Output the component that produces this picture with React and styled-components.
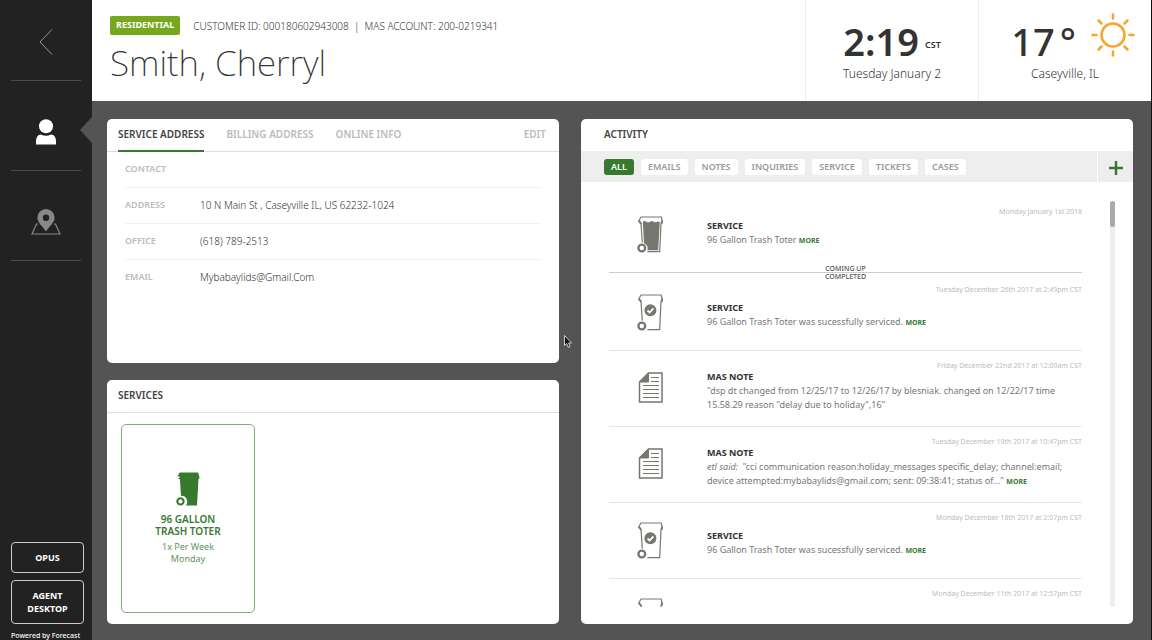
import React from "react";
import styled, { createGlobalStyle } from "styled-components";

const GlobalStyle = createGlobalStyle`
  *, *::before, *::after { box-sizing: border-box; }
  body {
    margin: 0;
    background: #545454;
    color: #555;
    font-family: "Noto Sans", "Open Sans", sans-serif;
    font-size: 10px;
    line-height: 14px;
  }
  h1, h2, h3, p, ul, dl, dd, dt { margin: 0; padding: 0; }
  ul { list-style: none; }
  button { font-family: inherit; cursor: pointer; }
`;

const green = "#37792f";

const Shell = styled.div`
  position: relative;
  display: grid;
  grid-template-columns: 92px minmax(0, 1fr);
  height: 100vh;
  min-height: 560px;
  overflow: hidden;
  border-right: 1px solid #111;
`;

const Sidebar = styled.aside`
  display: flex;
  flex-direction: column;
  justify-content: space-between;
  min-height: 0;
  background: #222;
  color: #fff;
`;

const NavItem = styled.li`
  position: relative;
  margin: 0 11px;
  padding: ${(p) => (p.$first ? 28 : 37)}px 0 24px;
  border-bottom: 1px solid #4a4a4a;
`;

const NavButton = styled.button`
  display: flex;
  align-items: center;
  justify-content: center;
  width: 100%;
  height: 28px;
  padding: 0;
  border: 0;
  background: none;
`;

const ActiveNotch = styled.span`
  position: absolute;
  right: -11px;
  top: 36px;
  border-style: solid;
  border-color: transparent #545454 transparent transparent;
  border-width: 13px 12px 13px 0;
`;

const SidebarFoot = styled.div`
  display: flex;
  flex-direction: column;
  gap: 7px;
  padding: 0 8px 0 11px;
`;

const OutlineButton = styled.button`
  padding: 8px 4px;
  border: 1px solid #ccc;
  border-radius: 4px;
  background: #222;
  color: #fff;
  font-size: 9px;
  font-weight: 700;
  line-height: 13px;
`;

const Powered = styled.p`
  font-size: 7px;
  font-weight: 500;
  line-height: 9px;
  white-space: nowrap;
`;

const Page = styled.div`
  display: flex;
  flex-direction: column;
  min-width: 0;
  min-height: 0;
`;

const Header = styled.header`
  display: grid;
  grid-template-columns: minmax(0, 1fr) 173px 173px;
  flex: none;
  min-height: 101px;
  background: #fff;
`;

const Customer = styled.div`
  padding: 16px 18px 0;
`;

const CustomerMeta = styled.div`
  display: flex;
  align-items: center;
  gap: 13px;
  color: #333;
  font-size: 10px;
  font-weight: 300;
  white-space: nowrap;
`;

const Badge = styled.span`
  padding: 2px 6px 3px;
  border-radius: 2px;
  background: #76a81e;
  color: #fff;
  font-size: 9px;
  font-weight: 700;
`;

const Name = styled.h1`
  margin-top: 2px;
  color: #333;
  font-size: 35px;
  font-weight: 200;
  line-height: 52px;
`;

const Panel = styled.div`
  display: flex;
  flex-direction: column;
  align-items: center;
  padding-top: 20px;
  border-left: 1px solid #eee;
`;

const PanelTop = styled.div`
  display: flex;
  align-items: center;
  gap: 6px;
  height: 42px;
  color: #333;
  font-size: 38px;
  font-weight: 600;
  line-height: 42px;
`;

const Temperature = styled(PanelTop)`
  gap: 5px;
  padding-left: 16px;
  font-weight: 500;
`;

const Zone = styled.span`
  padding-top: 8px;
  font-size: 9px;
  line-height: 14px;
`;

const Sun = styled.svg`
  margin: -12px 0 0 10px;
`;

const PanelText = styled.div`
  color: #333;
  font-size: 12px;
  font-weight: 300;
  line-height: 24px;
`;

const Main = styled.main`
  display: grid;
  grid-template-columns: minmax(0, 452fr) minmax(0, 552fr);
  grid-template-rows: minmax(0, 1fr) minmax(0, 1fr);
  gap: 17px 22px;
  flex: 1;
  min-height: 0;
  padding: 18px 18px 16px 15px;
`;

const Card = styled.section`
  display: flex;
  flex-direction: column;
  grid-row: ${(p) => (p.$tall ? "1 / span 2" : "auto")};
  grid-column: ${(p) => (p.$tall ? 2 : 1)};
  min-height: 0;
  overflow: hidden;
  border-radius: 5px;
  background: #fff;
`;

const CardHead = styled.div`
  display: flex;
  align-items: stretch;
  gap: 22px;
  flex: none;
  height: ${(p) => (p.$plain ? 32 : 33)}px;
  padding: 0 ${(p) => (p.$plain ? 23 : 11)}px;
  border-bottom: ${(p) => (p.$plain ? "0" : "1px solid #ddd")};
`;

const CardTitle = styled.h2`
  color: #444;
  font-size: 10px;
  font-weight: 600;
  line-height: 31px;
`;

const Tab = styled.button`
  height: 33px;
  margin-left: ${(p) => (p.$end ? "auto" : 0)};
  padding: 0 ${(p) => (p.$end ? 2 : 0)}px 2px 0;
  border: 0;
  border-bottom: 2px solid ${(p) => (p.$active ? green : "transparent")};
  background: none;
  color: ${(p) => (p.$active ? "#444" : "#bbb")};
  font-size: 10px;
  font-weight: 600;
`;

const Details = styled.dl`
  padding: 0 18px;
`;

const DetailRow = styled.div`
  display: grid;
  grid-template-columns: 75px minmax(0, 1fr);
  align-items: center;
  height: 36px;
  padding-bottom: 1px;
  border-bottom: 1px solid ${(p) => (p.$last ? "transparent" : "#f2f2f2")};

  dt { color: #bbb; font-size: 9px; font-weight: 600; }
  dd { color: #333; font-weight: 300; }
`;

const ServicesBody = styled.div`
  display: flex;
  flex: 1;
  min-height: 0;
  padding: 11px 14px;
`;

const ServiceTile = styled.button`
  display: flex;
  flex-direction: column;
  align-items: center;
  justify-content: center;
  width: 134px;
  border: 1px solid #7fac7a;
  border-radius: 5px;
  background: #fff;
  color: ${green};
  line-height: 12px;

  strong { width: 80px; margin: 7px 0 4px; font-size: 10px; font-weight: 600; }
  span { width: 60px; font-size: 9px; font-weight: 400; color: #5e9658; }
`;

const FilterBar = styled.div`
  display: flex;
  flex: none;
  height: 31px;
  background: #eee;
`;

const Filters = styled.div`
  display: flex;
  align-items: center;
  gap: 7px;
  flex: 1;
  padding-left: 23px;
`;

const Filter = styled.button`
  height: 16px;
  padding: 0 7px;
  border: 0;
  border-radius: 3px;
  background: ${(p) => (p.$active ? green : "#fff")};
  color: ${(p) => (p.$active ? "#fff" : "#999")};
  font-size: 9px;
  font-weight: 600;
  line-height: 16px;
`;

const AddButton = styled.button`
  display: flex;
  align-items: center;
  justify-content: center;
  width: 36px;
  padding: 2px 0 0;
  border: 0;
  border-left: 1px solid #fff;
  background: none;
`;

const Feed = styled.div`
  display: flex;
  flex: 1;
  gap: 28px;
  min-height: 0;
  padding: 15px 18px 17px 28px;
`;

const FeedList = styled.ul`
  flex: 1;
  min-width: 0;
  overflow-y: auto;
  scrollbar-width: none;
`;

const Track = styled.div`
  width: 5px;
  margin-top: 4px;
  border-radius: 3px;
  background: #eee;
`;

const Thumb = styled.div`
  height: 26px;
  border-radius: 3px;
  background: #aaa;
`;

const Entry = styled.li`
  position: relative;
  display: grid;
  grid-template-columns: 82px minmax(0, 1fr);
  column-gap: 16px;
  align-items: center;
  height: 76px;
  border-bottom: 1px solid ${(p) => (p.$plain ? "transparent" : "#e4e4e4")};
`;

const EntryIcon = styled.div`
  display: flex;
  justify-content: center;
`;

const EntryDate = styled.time`
  position: absolute;
  top: 10px;
  right: 0;
  color: #bbb;
  font-size: 7px;
  line-height: 10px;
`;

const EntryText = styled.div`
  padding: ${(p) => (p.$plain ? "0 0 3px" : "4px 0 0")};
  color: #777;
  font-size: 9px;

  h3 { color: #333; font-size: 9px; font-weight: 700; }
`;

const More = styled.button`
  padding: 0;
  border: 0;
  background: none;
  color: ${green};
  font-size: 7px;
  font-weight: 700;
`;

const Divider = styled.li`
  position: relative;
  height: 2px;
`;

const DividerLabels = styled.div`
  position: absolute;
  left: 0;
  right: 0;
  top: -8px;
  height: 15px;
  overflow: hidden;
  color: #555;
  font-size: 7px;
  font-weight: 500;
  line-height: 8px;
  text-align: center;

  &::after {
    content: "";
    position: absolute;
    left: 0;
    right: 0;
    top: 7px;
    border-top: 1px solid #ccc;
  }
`;

const Cursor = styled.svg`
  position: absolute;
  left: 564px;
  top: 335px;
  pointer-events: none;
`;

function Toter({ variant, color = "#77776f", width = 26, height = 37 }) {
  const solid = variant === "solid";
  return (
    <svg width={width} height={height} viewBox="0 0 26 37" fill="none" aria-hidden="true">
      {solid ? (
        <>
          <path d="M4 .5H24L25.6 6 24.4 8 22.8 36.5H10.5A6.3 6.3 0 0 0 5.4 26L4.2 8 2.2 7 1.6 4.5Z" fill={color} />
          <circle cx="2.8" cy="5.6" r="1.1" fill="#fff" />
        </>
      ) : (
        <>
          <path
            d="M5.3 26.5 4 7.4 1.6 5.2 4 1H24.2L25.2 5.2 24 7.4 22.7 35.6H10.4"
            stroke={color}
            strokeWidth="1.2"
            strokeLinejoin="round"
          />
          <path d="M2 4.8 4.2 8M25 4.6V7.8" stroke={color} strokeWidth="1.8" />
        </>
      )}
      {variant === "full" && (
        <path
          d="M5.8 5.8Q7.8 4.2 9.4 5.8 11.4 7.2 13.4 5.4 15 4.4 16.6 5.8 18.6 7 20.4 5.4L22.8 5.8 21.2 34.2H10.4A6 6 0 0 0 7 27.2Z"
          fill={color}
        />
      )}
      {variant === "done" && (
        <>
          <circle cx="13.4" cy="16.3" r="6" fill={color} />
          <path d="M10.5 16.5 12.7 18.5 16.4 14.4" stroke="#fff" strokeWidth="1.8" />
        </>
      )}
      <circle cx="4.8" cy="32" r="3.4" stroke={color} strokeWidth="2.3" fill="#fff" />
    </svg>
  );
}

function NoteIcon() {
  return (
    <svg width="26" height="33" viewBox="0 0 26 33" fill="none" stroke="#77776f" aria-hidden="true">
      <path d="M11.5 1H25V30H2.5V10Z" strokeWidth="1.5" />
      <path d="M11.5 1V10H2.5Z" fill="#77776f" />
      <path d="M14 5.500H22M14 9.500H22M6 13.500H22M6 17.500H22M6 21.500H22M6 25.500H22" strokeWidth="1.2" />
    </svg>
  );
}

const filters = ["ALL", "EMAILS", "NOTES", "INQUIRIES", "SERVICE", "TICKETS", "CASES"];

const details = [
  ["CONTACT", ""],
  ["ADDRESS", "10 N Main St , Caseyville IL, US 62232-1024"],
  ["OFFICE", "(618) 789-2513"],
  ["EMAIL", "Mybabaylids@Gmail.Com"],
];

const entries = [
  {
    icon: "done", title: "SERVICE", date: "Tuesday December 26th 2017 at 2:49pm CST",
    text: "96 Gallon Trash Toter was sucessfully serviced.", more: true,
  },
  {
    icon: "note", title: "MAS NOTE", date: "Friday December 22nd 2017 at 12:00am CST",
    text: <>"dsp dt changed from 12/25/17 to 12/26/17 by blesniak. changed on 12/22/17 time<br />15.58.29 reason "delay due to holiday",16"</>,
  },
  {
    icon: "note", title: "MAS NOTE", date: "Tuesday December 19th 2017 at 10:47pm CST",
    text: <><em>etl said:</em>&nbsp; "cci communication reason:holiday_messages specific_delay; channel:email;<br />device attempted:mybabaylids@gmail.com; sent: 09:38:41; status of..."</>,
    more: true,
  },
  {
    icon: "done", title: "SERVICE", date: "Monday December 18th 2017 at 2:07pm CST",
    text: "96 Gallon Trash Toter was sucessfully serviced.", more: true,
  },
  {
    icon: "done", title: "SERVICE", date: "Monday December 11th 2017 at 12:57pm CST",
    text: "96 Gallon Trash Toter was sucessfully serviced.", more: true,
  },
];

function FeedEntry({ icon, title, date, text, more, plain }) {
  return (
    <Entry $plain={plain}>
      <EntryIcon>{icon === "note" ? <NoteIcon /> : <Toter variant={icon} />}</EntryIcon>
      <EntryText $plain={plain}>
        <h3>{title}</h3>
        <p>{text} {more && <More>MORE</More>}</p>
      </EntryText>
      <EntryDate>{date}</EntryDate>
    </Entry>
  );
}

export default function App() {
  return (
    <>
      <GlobalStyle />
      <Shell>
        <Sidebar>
          <nav>
            <ul>
              <NavItem $first>
                <NavButton aria-label="Back">
                  <svg width="14" height="26" viewBox="0 0 14 26" fill="none" stroke="#999">
                    <path d="M13 .5 1 13 13 25.5" />
                  </svg>
                </NavButton>
              </NavItem>
              <NavItem>
                <NavButton aria-label="Customer">
                  <svg width="20" height="26" viewBox="0 0 20 26" fill="#fff">
                    <circle cx="10" cy="7.3" r="7" />
                    <path d="M0 25.5V23Q0 15.5 5 15.5 10 18 15 15.5 20 15.5 20 23V25.5Z" />
                  </svg>
                </NavButton>
                <ActiveNotch />
              </NavItem>
              <NavItem>
                <NavButton aria-label="Map">
                  <svg width="30" height="26" viewBox="0 0 30 26">
                    <path d="M7 15H5.5L1 25H29L24.5 15H23" fill="none" stroke="#888" strokeWidth="1.2" />
                    <path
                      d="M15 0A8.6 8.6 0 0 1 23.6 8.6C23.6 14 18.5 17 15 22.5 11.5 17 6.4 14 6.4 8.6A8.6 8.6 0 0 1 15 0ZM15 5.5A3.2 3.2 0 1 0 15 11.9 3.2 3.2 0 1 0 15 5.5Z"
                      fill="#888"
                      fillRule="evenodd"
                    />
                  </svg>
                </NavButton>
              </NavItem>
            </ul>
          </nav>
          <SidebarFoot>
            <OutlineButton>OPUS</OutlineButton>
            <OutlineButton>AGENT<br />DESKTOP</OutlineButton>
            <Powered>Powered by Forecast</Powered>
          </SidebarFoot>
        </Sidebar>

        <Page>
          <Header>
            <Customer>
              <CustomerMeta>
                <Badge>RESIDENTIAL</Badge>
                <span>CUSTOMER ID: 000180602943008 &nbsp;|&nbsp; MAS ACCOUNT: 200-0219341</span>
              </CustomerMeta>
              <Name>Smith, Cherryl</Name>
            </Customer>
            <Panel>
              <PanelTop>2:19<Zone>CST</Zone></PanelTop>
              <PanelText>Tuesday January 2</PanelText>
            </Panel>
            <Panel>
              <Temperature>
                <span>17</span>
                <span>°</span>
                <Sun width="44" height="44" viewBox="0 0 44 44" fill="none" stroke="#f9a428" strokeLinecap="round" aria-hidden="true">
                  <circle cx="22" cy="22" r="11.5" strokeWidth="2.5" />
                  <path
                    d="M22 1.5V5.5M22 38.5V42.5M1.5 22H5.5M38.5 22H42.5M7.5 7.5 10.5 10.5M33.5 33.5 36.5 36.5M7.5 36.5 10.5 33.5M33.5 10.5 36.5 7.5"
                    strokeWidth="2.5"
                  />
                </Sun>
              </Temperature>
              <PanelText>Caseyville, IL</PanelText>
            </Panel>
          </Header>

          <Main>
            <Card>
              <CardHead>
                <Tab $active>SERVICE ADDRESS</Tab>
                <Tab>BILLING ADDRESS</Tab>
                <Tab>ONLINE INFO</Tab>
                <Tab $end>EDIT</Tab>
              </CardHead>
              <Details>
                {details.map(([label, value], i) => (
                  <DetailRow key={label} $last={i === details.length - 1}>
                    <dt>{label}</dt>
                    <dd>{value}</dd>
                  </DetailRow>
                ))}
              </Details>
            </Card>

            <Card>
              <CardHead>
                <CardTitle>SERVICES</CardTitle>
              </CardHead>
              <ServicesBody>
                <ServiceTile>
                  <Toter variant="solid" color={green} width={24} height={34} />
                  <strong>96 GALLON TRASH TOTER</strong>
                  <span>1x Per Week Monday</span>
                </ServiceTile>
              </ServicesBody>
            </Card>

            <Card $tall>
              <CardHead $plain>
                <CardTitle>ACTIVITY</CardTitle>
              </CardHead>
              <FilterBar>
                <Filters>
                  {filters.map((label, i) => (
                    <Filter key={label} $active={i === 0}>{label}</Filter>
                  ))}
                </Filters>
                <AddButton aria-label="Add activity">
                  <svg width="14" height="14" viewBox="0 0 14 14" stroke={green} strokeWidth="2.5">
                    <path d="M7 0V14M0 7H14" />
                  </svg>
                </AddButton>
              </FilterBar>
              <Feed>
                <FeedList>
                  <FeedEntry plain icon="full" title="SERVICE" date="Monday January 1st 2018" text="96 Gallon Trash Toter" more />
                  <Divider>
                    <DividerLabels>COMING UP<br />COMPLETED</DividerLabels>
                  </Divider>
                  {entries.map((entry) => (
                    <FeedEntry key={entry.date} {...entry} />
                  ))}
                </FeedList>
                <Track><Thumb /></Track>
              </Feed>
            </Card>
          </Main>
        </Page>

        <Cursor width="8" height="13" viewBox="0 0 8 13" aria-hidden="true">
          <path d="M.5 .5V10.5L2.8 8.5 4.3 12.3 6 11.6 4.5 8H7.5Z" fill="#111" stroke="#eee" strokeWidth=".8" />
        </Cursor>
      </Shell>
    </>
  );
}
